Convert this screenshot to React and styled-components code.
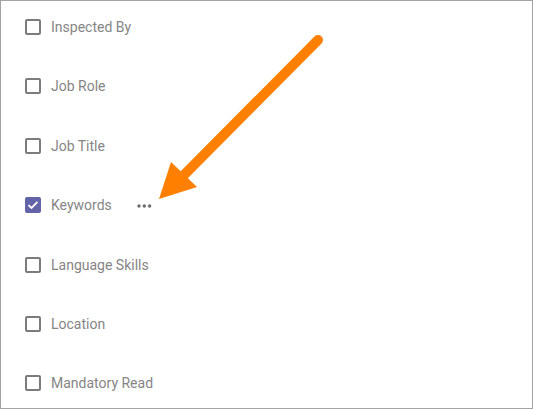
import React from 'react';
import styled, { createGlobalStyle } from 'styled-components';

const GlobalStyle = createGlobalStyle`
  html, body {
    margin: 0;
    padding: 0;
    background: #ffffff;
  }
  * {
    box-sizing: border-box;
  }
`;

const Frame = styled.div`
  position: relative;
  width: 533px;
  height: 409px;
  border: 1px solid #a3a3a3;
  background: #ffffff;
  font-family: Roboto, 'Liberation Sans', sans-serif;
  overflow: hidden;
`;

const List = styled.div`
  display: flex;
  flex-direction: column;
  gap: 39.4px;
  padding: 16px 0 0 24px;
`;

const Row = styled.label`
  display: flex;
  align-items: center;
  height: 20px;
`;

const Box = styled.span`
  display: flex;
  align-items: center;
  justify-content: center;
  width: 16px;
  height: 16px;
  border-radius: 2px;
  border: ${(p) => (p.checked ? 'none' : '2px solid #7c7c7c')};
  background: ${(p) => (p.checked ? '#6264a7' : 'transparent')};
`;

const Label = styled.span`
  margin-left: 10px;
  font-size: 14px;
  color: #858585;
  line-height: 20px;
`;

const More = styled.span`
  display: flex;
  align-items: center;
  margin-left: 25px;
  margin-top: 1px;
`;

const Arrow = styled.svg`
  position: absolute;
  left: 0;
  top: 0;
  pointer-events: none;
`;

const items = [
  { name: 'Inspected By' },
  { name: 'Job Role' },
  { name: 'Job Title' },
  { name: 'Keywords', checked: true, more: true },
  { name: 'Language Skills' },
  { name: 'Location' },
  { name: 'Mandatory Read' },
];

function App() {
  return (
    <>
      <GlobalStyle />
      <Frame>
        <List>
          {items.map((it) => (
            <Row key={it.name}>
              <Box checked={it.checked}>
                {it.checked && (
                  <svg width="12" height="10" viewBox="0 0 12 10">
                    <path d="M1.5 5.2 L4.5 8 L10.5 1.8" fill="none" stroke="#ffffff" strokeWidth="1.8" />
                  </svg>
                )}
              </Box>
              <Label>{it.name}</Label>
              {it.more && (
                <More>
                  <svg width="15" height="4" viewBox="0 0 15 4">
                    <circle cx="2" cy="2" r="1.7" fill="#6b6b6b" />
                    <circle cx="7.3" cy="2" r="1.7" fill="#6b6b6b" />
                    <circle cx="12.6" cy="2" r="1.7" fill="#6b6b6b" />
                  </svg>
                </More>
              )}
            </Row>
          ))}
        </List>
        <Arrow width="533" height="409" viewBox="0 0 533 409">
          <line x1="317" y1="39" x2="182" y2="175" stroke="#ff8000" strokeWidth="10" strokeLinecap="round" />
          <polygon points="170,161 158,198 196,186" fill="#ff8000" />
        </Arrow>
      </Frame>
    </>
  );
}

export default App;
